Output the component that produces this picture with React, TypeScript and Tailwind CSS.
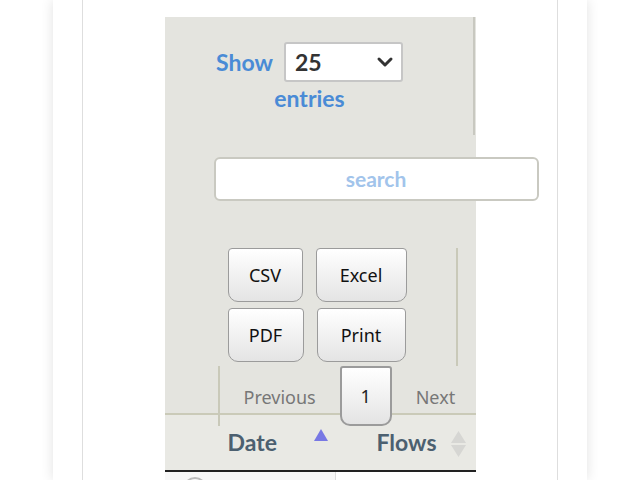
import { ChevronDown } from 'lucide-react';

const LABEL_FONT = { fontFamily: 'Lato, "Noto Sans", sans-serif' };
const BTN_FONT = { fontFamily: '"Noto Sans", "Open Sans", sans-serif' };

function ExportButton({ label, width }: { label: string; width: string }) {
    return (
        <button
            className={`${width} h-[54px] rounded-t-[4px] rounded-b-[10px] border border-[#9b9b9b] bg-gradient-to-b from-white to-[#e4e4e4] text-[18px] text-[#111]`}
            style={BTN_FONT}
        >
            {label}
        </button>
    );
}

export default function App() {
    return (
        <div className="h-[480px] overflow-hidden bg-white">
            <div className="mx-auto h-full w-[534px] bg-white px-[29px] shadow-[0_0_12px_rgba(0,0,0,0.12)]">
                <div className="h-full border-x border-[#dedede] pt-[17px]">
                    <div className="mx-auto w-[311px] bg-[#e4e4df]">
                        {/* length control */}
                        <div className="h-[118px] w-[310px] border-r-2 border-[#c8c8c0] pt-[25px] pr-[18px] text-center" style={LABEL_FONT}>
                            <div className="flex items-center justify-center gap-[11px]">
                                <span className="text-[23px] font-bold text-[#4a8bd6]">Show</span>
                                <div className="flex h-[40px] w-[119px] items-center justify-between rounded-[3px] border-2 border-[#c6c6c6] bg-white pl-[9px] pr-[4px]">
                                    <span className="text-[23px] font-bold text-[#333]">25</span>
                                    <ChevronDown className="h-[24px] w-[24px] text-[#333]" strokeWidth={3} />
                                </div>
                            </div>
                            <div className="text-[23px] font-bold leading-[32px] text-[#4a8bd6]">entries</div>
                        </div>

                        {/* search */}
                        <div className="pt-[22px] pb-[47px]">
                            <div
                                className="ml-[49px] flex h-[44px] w-[325px] items-center justify-center rounded-[6px] border-2 border-[#c9c9c1] bg-white text-[21px] font-bold text-[#a2c4eb]"
                                style={LABEL_FONT}
                            >
                                search
                            </div>
                        </div>

                        {/* export buttons */}
                        <div className="w-[293px] border-r-2 border-[#c9c9b9] pl-[63px] pb-[4px]">
                            <div className="flex flex-col gap-[6px]">
                                <div className="flex gap-[13px]">
                                    <ExportButton label="CSV" width="w-[75px]" />
                                    <ExportButton label="Excel" width="w-[91px]" />
                                </div>
                                <div className="flex gap-[13px]">
                                    <ExportButton label="PDF" width="w-[76px]" />
                                    <ExportButton label="Print" width="w-[89px]" />
                                </div>
                            </div>
                        </div>

                        {/* pagination */}
                        <div className="relative z-10 -mb-[13px] ml-[53px] flex h-[60px] items-start border-l-2 border-[#c9c9b9] text-[18px] text-[#777]" style={BTN_FONT}>
                            <span className="ml-[24px] mt-[18px]">Previous</span>
                            <button className="ml-[24px] h-[60px] w-[52px] rounded-t-[3px] rounded-b-[10px] border-2 border-[#9b9b9b] bg-gradient-to-b from-white to-[#e4e4e4] text-[18px] text-[#222]">
                                1
                            </button>
                            <span className="ml-[24px] mt-[18px]">Next</span>
                        </div>

                        {/* table header */}
                        <div className="flex h-[59px] border-t-2 border-[#cacab8] bg-[#e9e9e4] border-b-2 border-b-[#222]" style={LABEL_FONT}>
                            <div className="relative flex w-[171px] items-center pl-[63px]">
                                <span className="text-[23px] font-bold text-[#4c6070]">Date</span>
                                <svg className="absolute left-[149px] top-[14px]" width="14" height="12" viewBox="0 0 14 12">
                                    <path d="M7 0 L14 12 L0 12 Z" fill="#7878e4" />
                                </svg>
                            </div>
                            <div className="relative flex flex-1 items-center pl-[41px]">
                                <span className="text-[23px] font-bold text-[#4c6070]">Flows</span>
                                <svg className="absolute left-[115px] top-[16px]" width="15" height="26" viewBox="0 0 15 26">
                                    <path d="M7.5 0 L15 12 L0 12 Z" fill="#d6d6d3" />
                                    <path d="M0 14 L15 14 L7.5 26 Z" fill="#d6d6d3" />
                                </svg>
                            </div>
                        </div>

                        {/* first row */}
                        <div className="flex h-[20px] bg-white">
                            <div className="relative w-[171px] border-r border-[#dcdcdc] bg-[#f7f7f7]">
                                <span className="absolute left-[18px] top-[5px] h-[24px] w-[24px] rounded-full border-2 border-[#bbb]" />
                            </div>
                            <div className="flex-1" />
                        </div>
                    </div>
                </div>
            </div>
        </div>
    );
}
